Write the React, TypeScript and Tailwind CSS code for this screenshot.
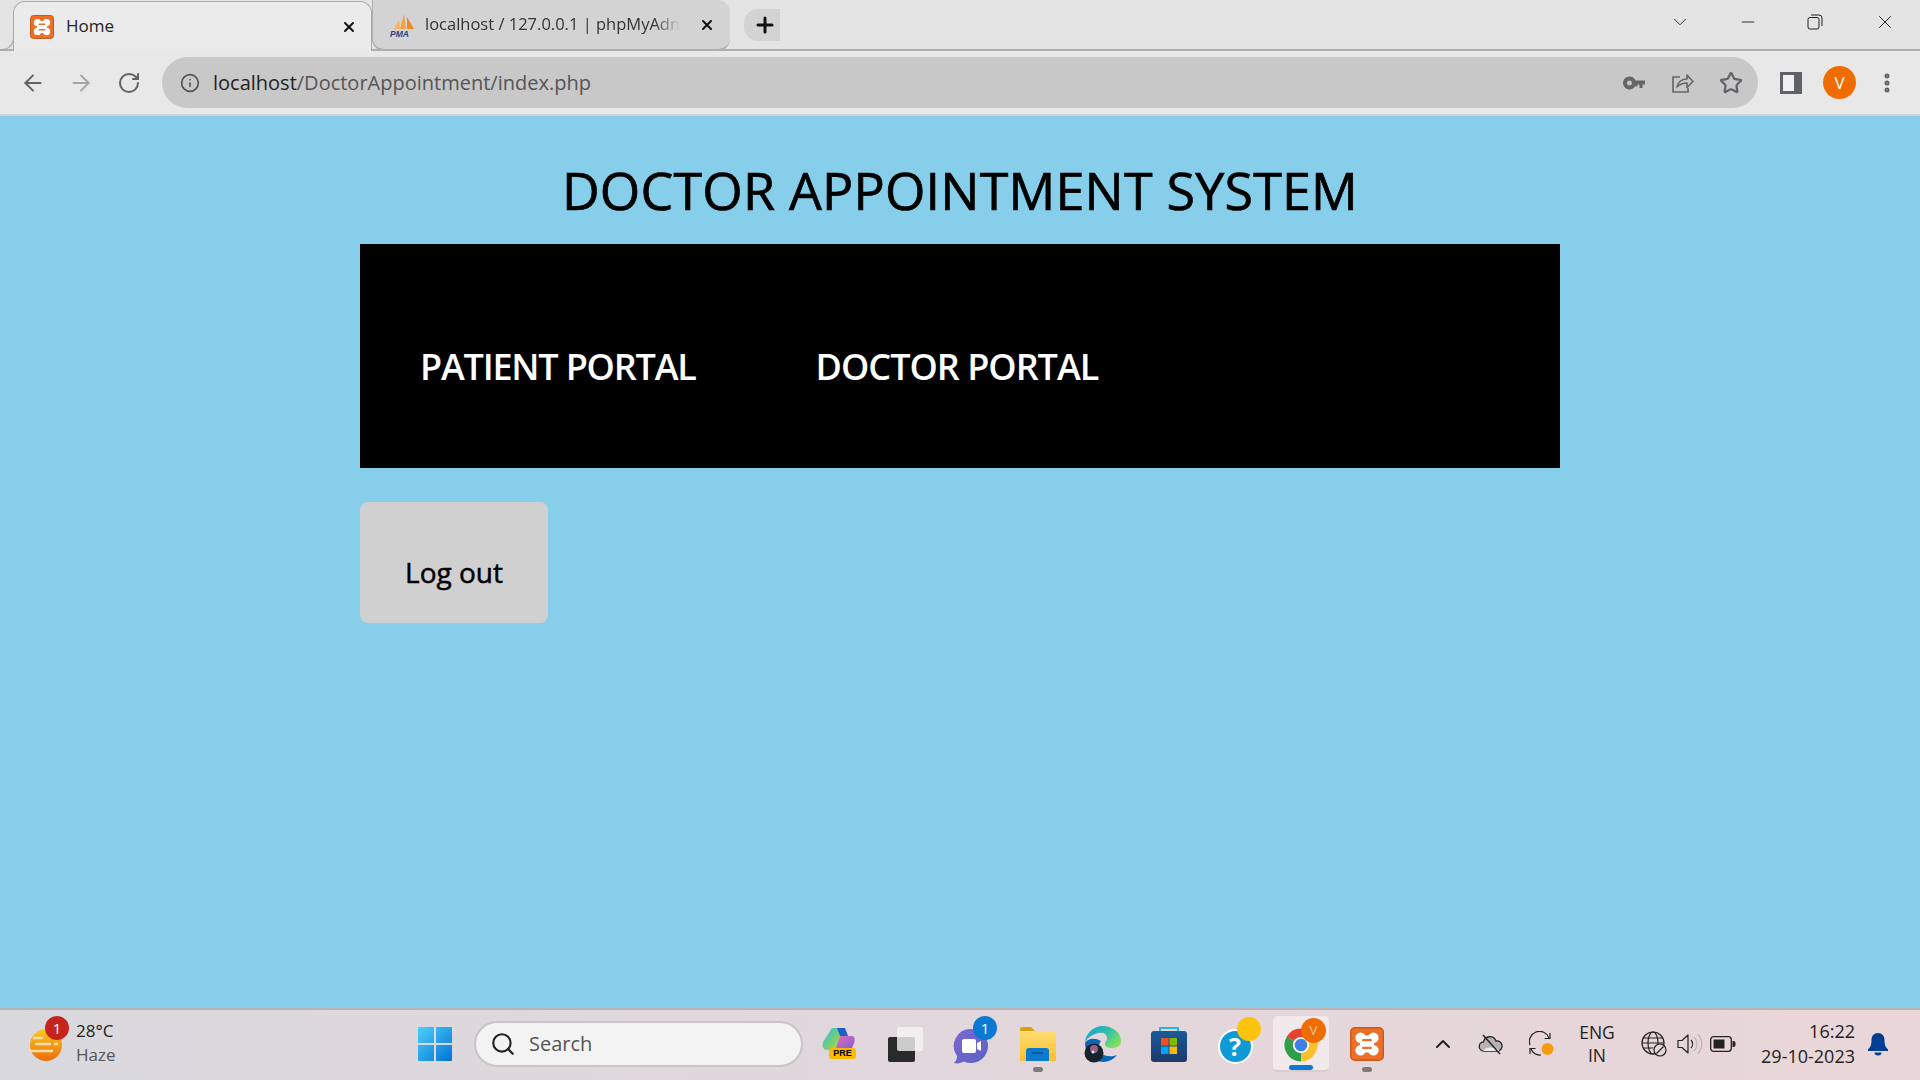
import { ArrowLeft, ArrowRight, RotateCw, Info, Star, X, Plus, Minus, ChevronDown, ChevronUp, Search, EllipsisVertical } from "lucide-react";

const uiFont = "font-['Open_Sans','Noto_Sans',sans-serif]";

function XamppIcon({ size }: { size: number }) {
  return (
    <svg width={size} height={size} viewBox="0 0 24 24">
      <rect x="0.5" y="0.5" width="23" height="23" rx="3" fill="#ec6f27" stroke="#c9591b" />
      <g fill="#fff">
        <circle cx="7.5" cy="7.6" r="3.7" />
        <circle cx="16.5" cy="7.6" r="3.7" />
        <circle cx="7.5" cy="16.4" r="3.7" />
        <circle cx="16.5" cy="16.4" r="3.7" />
        <rect x="7" y="6" width="10" height="12" />
      </g>
      <g fill="#ec6f27">
        <circle cx="12" cy="3.9" r="1.9" />
        <circle cx="12" cy="20.1" r="1.9" />
        <circle cx="3" cy="12" r="1.8" />
        <circle cx="21" cy="12" r="1.8" />
        <rect x="8.5" y="8.5" width="7" height="1.5" rx="0.7" />
        <rect x="8.5" y="14" width="7" height="1.5" rx="0.7" />
      </g>
    </svg>
  );
}

function PmaIcon() {
  return (
    <svg width="26" height="26" viewBox="0 0 26 26">
      <path d="M4 17 9 8l1 9z" fill="#f6b26b" />
      <path d="M10 17 14 2l2 15z" fill="#f7a13c" />
      <path d="M17 17V5l7 12z" fill="#f08a1d" />
      <text x="0" y="25" fontSize="8.5" fontWeight="800" fontStyle="italic" fill="#2e3f83" fontFamily="Liberation Sans, sans-serif">PMA</text>
    </svg>
  );
}

function KeyIcon() {
  return (
    <svg width="22" height="14" viewBox="0 0 22 14">
      <path d="M6.5 0.5a6.5 6.5 0 0 1 6 4H22v4h-2.5v3.5h-3V8.5h-2V10.5h-2V9.5a6.500 6.500 0 1 1-6-9zm0 4a2.500 2.500 0 1 0 0 5 2.500 2.500 0 0 0 0-5z" fill="#666" fillRule="evenodd" />
    </svg>
  );
}

function ShareIcon() {
  return (
    <svg width="24" height="24" viewBox="0 0 24 24" fill="none" stroke="#666" strokeWidth="1.6">
      <path d="M10 6H3v15h15v-4" />
      <path d="M7 16c1-5 5-8 10-8V4l6 6.5-6 6V12c-4 0-7 1-10 4z" strokeLinejoin="round" />
    </svg>
  );
}

function SidePanelIcon() {
  return (
    <svg width="22" height="22" viewBox="0 0 22 22">
      <rect width="22" height="22" fill="#5f6368" />
      <rect x="3" y="3" width="11" height="16" fill="#f1f1f1" />
    </svg>
  );
}

function RestoreIcon() {
  return (
    <svg width="16" height="16" viewBox="0 0 16 16" fill="none" stroke="#222" strokeWidth="1">
      <rect x="1" y="3.5" width="11" height="11.5" rx="2" />
      <path d="M4 1h8a3 3 0 0 1 3 3v8" />
    </svg>
  );
}

function WeatherIcon() {
  return (
    <div className="relative w-[40px] h-[40px]">
      <svg width="36" height="36" viewBox="0 0 36 36" className="absolute left-0 top-[3px]">
        <defs>
          <linearGradient id="sun" x1="0" y1="0" x2="0" y2="1">
            <stop offset="0" stopColor="#fdc921" />
            <stop offset="1" stopColor="#ea6d0c" />
          </linearGradient>
        </defs>
        <circle cx="18" cy="18" r="16" fill="url(#sun)" />
        <g stroke="#f3dda9" strokeWidth="2.4" strokeLinecap="round">
          <path d="M6 11h8M8 17h14M2 24h22M27 17h2" />
        </g>
      </svg>
      <span className="absolute left-[17px] top-[-8px] w-[24px] h-[24px] rounded-full bg-[#c4261d] text-white text-[15px] flex items-center justify-center">1</span>
    </div>
  );
}

function WindowsIcon() {
  return (
    <svg width="36" height="36" viewBox="0 0 36 36">
      <defs>
        <linearGradient id="win" x1="0" y1="0" x2="1" y2="1">
          <stop offset="0" stopColor="#4fd0fb" />
          <stop offset="1" stopColor="#0073d4" />
        </linearGradient>
      </defs>
      <path d="M1 2a1 1 0 0 1 1-1h15v16H1zM19 1h15a1 1 0 0 1 1 1v15H19zM1 19h16v16H2a1 1 0 0 1-1-1zM19 19h16v15a1 1 0 0 1-1 1H19z" fill="url(#win)" />
    </svg>
  );
}

function CopilotIcon() {
  return (
    <div className="relative w-[36px] h-[36px]">
      <svg width="34" height="30" viewBox="0 0 34 30" className="absolute left-0 top-0">
        <defs>
          <linearGradient id="cop1" x1="0" y1="0" x2="1" y2="1">
            <stop offset="0" stopColor="#2cb7f0" />
            <stop offset="0.6" stopColor="#7fd06a" />
            <stop offset="1" stopColor="#d9d64d" />
          </linearGradient>
          <linearGradient id="cop2" x1="0" y1="0" x2="1" y2="1">
            <stop offset="0" stopColor="#e26fb0" />
            <stop offset="1" stopColor="#7c5ae0" />
          </linearGradient>
        </defs>
        <path d="M10 2h10l-6 22H5C1 24 0 20 1 16z" fill="url(#cop1)" />
        <path d="M15 2h8l3 8h-8z" fill="#1b5fc9" />
        <path d="M18 10h12c3 0 3 4 2 7l-2 5c-1 2-3 3-5 3h-12z" fill="url(#cop2)" />
      </svg>
      <span className="absolute left-[7px] top-[22px] w-[27px] h-[11px] rounded-[3px] bg-[#fdb900] text-[9px] font-bold leading-[11px] text-center text-black font-['Liberation_Sans',sans-serif]">PRE</span>
    </div>
  );
}

function TaskViewIcon() {
  return (
    <svg width="36" height="36" viewBox="0 0 36 36">
      <rect x="1" y="11" width="27" height="25" rx="2" fill="#2a2a2a" />
      <rect x="10" y="1" width="26" height="24" rx="2" fill="#f4f4f4" fillOpacity="0.8" />
    </svg>
  );
}

function TeamsIcon() {
  return (
    <div className="relative w-[38px] h-[38px]">
      <svg width="36" height="36" viewBox="0 0 36 36" className="absolute left-0 top-[3px]">
        <defs>
          <linearGradient id="teams" x1="0" y1="0" x2="1" y2="1">
            <stop offset="0" stopColor="#7c68d4" />
            <stop offset="1" stopColor="#5a62c2" />
          </linearGradient>
        </defs>
        <path d="M18 1a17 17 0 1 1-7 32.5C8 35 4 36 1 35c2-2 3-4 3-7A17 17 0 0 1 18 1z" fill="url(#teams)" />
        <rect x="9" y="11" width="14" height="14" rx="2" fill="#fff" />
        <path d="M24 15l4-2v10l-4-2z" fill="#fff" />
      </svg>
      <span className="absolute left-[20px] top-[-9px] w-[24px] h-[24px] rounded-full bg-[#0b78d4] text-white text-[15px] flex items-center justify-center">1</span>
    </div>
  );
}

function ExplorerIcon() {
  return (
    <svg width="36" height="34" viewBox="0 0 36 34">
      <defs>
        <linearGradient id="folder" x1="0" y1="0" x2="0" y2="1">
          <stop offset="0" stopColor="#fedc6e" />
          <stop offset="1" stopColor="#fbc02d" />
        </linearGradient>
      </defs>
      <path d="M0 2a2 2 0 0 1 2-2h9l4 4h-15z" fill="#dc9f0c" />
      <path d="M0 5h36v29H0z" fill="url(#folder)" />
      <path d="M6 34V24a3 3 0 0 1 3-3h17a3 3 0 0 1 3 3v10z" fill="#0c7bcf" />
      <path d="M12 26h11" stroke="#0a4d8a" strokeWidth="1.5" />
    </svg>
  );
}

function EdgeIcon() {
  return (
    <svg width="38" height="38" viewBox="0 0 38 38">
      <defs>
        <linearGradient id="edgeOuter" x1="0" y1="0" x2="1" y2="0.6">
          <stop offset="0" stopColor="#0f9fd8" />
          <stop offset="0.6" stopColor="#35c1a5" />
          <stop offset="1" stopColor="#7ee05c" />
        </linearGradient>
      </defs>
      <path d="M19 1c10 0 18 7 18 15 0 5-4 7-9 7-4 0-7-1-7-4 0-3 2-3 2-6 0-4-4-6-8-5C8 9 2 14 1 18 1 9 9 1 19 1z" fill="url(#edgeOuter)" />
      <path d="M1 18c0 10 8 19 18 19 6 0 11-3 14-7-5 2-12 2-16-2-3-3-3-8 0-12C10 12 3 14 1 18z" fill="#0b66b8" />
      <circle cx="10" cy="28" r="9.5" fill="#16242e" />
      <circle cx="10" cy="24" r="4" fill="#9a5f86" />
      <circle cx="9" cy="27" r="1.5" fill="#e9e3e8" />
    </svg>
  );
}

function StoreIcon() {
  return (
    <svg width="36" height="36" viewBox="0 0 36 36">
      <defs>
        <linearGradient id="bag" x1="0" y1="0" x2="0" y2="1">
          <stop offset="0" stopColor="#1a5a9a" />
          <stop offset="1" stopColor="#1c3a6b" />
        </linearGradient>
      </defs>
      <path d="M9 8V2h18v6" fill="none" stroke="#29b3e8" strokeWidth="2" />
      <rect y="5" width="36" height="31" rx="3" fill="url(#bag)" />
      <rect x="10" y="12" width="7.5" height="7.5" fill="#f25022" />
      <rect x="18.5" y="12" width="7.5" height="7.5" fill="#7fba00" />
      <rect x="10" y="20.5" width="7.5" height="7.5" fill="#00a4ef" />
      <rect x="18.5" y="20.5" width="7.5" height="7.5" fill="#ffb900" />
    </svg>
  );
}

function HelpIcon() {
  return (
    <div className="relative w-[36px] h-[36px]">
      <div className="absolute left-0 top-[3px] w-[35px] h-[35px] rounded-full bg-[#0f9ad6] border-2 border-white flex items-center justify-center text-white text-[25px] font-bold font-['Open_Sans',sans-serif]">?</div>
      <div className="absolute left-[19px] top-[-9px] w-[24px] h-[24px] rounded-full bg-[#fdc30e]" />
    </div>
  );
}

function ChromeIcon() {
  return (
    <div className="relative w-[36px] h-[36px]">
      <svg width="36" height="36" viewBox="0 0 24 24" className="absolute left-0 top-[2px]">
        <path d="M12 12 2.47 6.5A11 11 0 0 1 21.53 6.5Z" fill="#e5432f" />
        <path d="M12 12 21.53 6.5A11 11 0 0 1 12 23Z" fill="#fbc02d" />
        <path d="M12 12 12 23A11 11 0 0 1 2.47 6.5Z" fill="#2f9e48" />
        <circle cx="12" cy="12" r="5.4" fill="#fff" />
        <circle cx="12" cy="12" r="4.2" fill="#3f7fe8" />
      </svg>
      <span className="absolute left-[18px] top-[-7px] w-[25px] h-[25px] rounded-full bg-[#ee6c00] text-[#f4c9a0] text-[13px] flex items-center justify-center">V</span>
    </div>
  );
}

function CloudOffIcon() {
  return (
    <svg width="26" height="22" viewBox="0 0 26 22" fill="none">
      <path d="M6 18a4.5 4.5 0 0 1-.5-9 6.5 6.5 0 0 1 12.5-1 5 5 0 0 1 2 10z" fill="#b9b3b5" stroke="#222" strokeWidth="1.3" />
      <path d="M5 18c2-4 10-5 16-1v1z" fill="#f0ecec" />
      <path d="M5 2l17 19" stroke="#222" strokeWidth="1.4" />
    </svg>
  );
}

function SyncIcon() {
  return (
    <svg width="26" height="26" viewBox="0 0 26 26" fill="none" stroke="#222" strokeWidth="1.2">
      <path d="M1 14A10 10 0 0 1 20 7" />
      <path d="M21 2v5.5h-5.5M1 23v-5.5h5.5" />
      <path d="M2 18a10 10 0 0 0 10 6" />
      <circle cx="18.5" cy="18" r="6" fill="#f59b11" stroke="none" />
    </svg>
  );
}

function GlobeBlockedIcon() {
  return (
    <svg width="26" height="26" viewBox="0 0 26 26" fill="none" stroke="#222" strokeWidth="1.2">
      <circle cx="12" cy="12" r="11" />
      <ellipse cx="12" cy="12" rx="5" ry="11" />
      <path d="M1 12h22M2.5 7h19M2.5 17h10" />
      <circle cx="19" cy="19" r="6" fill="#e8d6d8" />
      <path d="M15.5 22.5l7-7" />
    </svg>
  );
}

function VolumeIcon() {
  return (
    <svg width="26" height="24" viewBox="0 0 26 24" fill="none" stroke="#222" strokeWidth="1.2">
      <path d="M1 8.5h4L11 3v18l-6-5.5H1z" strokeLinejoin="round" />
      <path d="M14 8a6 6 0 0 1 0 8" />
      <path d="M17 5a10 10 0 0 1 0 14M21 2.5a14 14 0 0 1 0 19" stroke="#bdb2b4" />
    </svg>
  );
}

function BatteryIcon() {
  return (
    <svg width="26" height="18" viewBox="0 0 26 18">
      <rect x="0.7" y="1.7" width="20.6" height="14.6" rx="3" fill="none" stroke="#222" strokeWidth="1.3" />
      <rect x="3.5" y="4.5" width="11" height="9" fill="#222" />
      <path d="M22.5 6h1a2 2 0 0 1 2 2v2a2 2 0 0 1-2 2h-1z" fill="#222" />
    </svg>
  );
}

function BellIcon() {
  return (
    <svg width="22" height="24" viewBox="0 0 22 24">
      <path d="M11 1c4 0 6.5 3 6.5 7 0 5 1 7 3.5 9.5V19H1v-1.5C3.5 15 4.5 13 4.5 8 4.5 4 7 1 11 1z" fill="#003e92" />
      <path d="M7.5 20.5h7a3.5 3 0 0 1-7 0z" fill="#003e92" />
    </svg>
  );
}

function TaskbarSlot({ width, dot, children }: { width: number; dot?: boolean; children: React.ReactNode }) {
  return (
    <div className="relative h-full flex items-center justify-center" style={{ width }}>
      {children}
      {dot && <span className="absolute bottom-[6px] w-[10px] h-[5px] rounded-full bg-[#7d7a7c]" />}
    </div>
  );
}

function App() {
  return (
    <div className={`w-[1920px] h-[1080px] flex flex-col overflow-hidden bg-[#87ceeb] ${uiFont}`}>
      {/* tab strip */}
      <div className="relative h-[51px] flex items-end bg-[#e4e4e4] border-b-2 border-[#aeaeae] shrink-0">
        <div className="relative ml-[13px] w-[359px] h-[50px] mb-[-2px] flex items-center pl-[16px] pr-[14px] bg-[#ebebeb] border border-b-0 border-[#a9a9a9] rounded-t-[12px] z-10">
          <span className="absolute left-[-14px] bottom-[1px] w-[14px] h-[14px] border-r border-b border-[#a9a9a9] rounded-br-[12px]" />
          <XamppIcon size={24} />
          <span className="ml-[12px] mt-[-2px] text-[17px] text-[#222] flex-1">Home</span>
          <X size={16} strokeWidth={3} className="text-[#111]" />
        </div>
        <div className="w-[358px] h-[51px] mb-[-2px] flex items-center pl-[17px] pr-[15px] bg-[#d3d3d3] border-l border-b-2 border-[#aeaeae] rounded-bl-[12px] rounded-r-[12px]">
          <PmaIcon />
          <span className="ml-[9px] w-[255px] text-[16.5px] text-[#333] whitespace-nowrap overflow-hidden mask-r-from-90%">localhost / 127.0.0.1 | phpMyAdmin</span>
          <X size={16} strokeWidth={3} className="text-[#111] ml-auto" />
        </div>
        <div className="ml-[14px] mb-[8px] w-[36px] h-[32px] flex items-center justify-center bg-[#d3d3d3] rounded-l-[14px]">
          <Plus size={24} strokeWidth={3} className="text-[#111] ml-[6px]" />
        </div>
        <div className="ml-auto h-full flex items-center pb-[6px]">
          <ChevronDown size={22} strokeWidth={1} className="text-[#222] mr-[47px]" />
          <Minus size={20} strokeWidth={1} className="text-[#111] mr-[49px]" />
          <RestoreIcon />
          <X size={22} strokeWidth={1} className="text-[#111] ml-[51px] mr-[24px]" />
        </div>
      </div>

      {/* toolbar */}
      <div className="h-[65px] flex items-center bg-[#e8e8e8] border-b-2 border-[#d2d2d2] shrink-0">
        <div className="w-[162px] flex items-center pl-[20px]">
          <ArrowLeft size={26} strokeWidth={1.8} className="text-[#5f6368]" />
          <ArrowRight size={26} strokeWidth={1.8} className="text-[#a4a4a4] ml-[22px]" />
          <RotateCw size={24} strokeWidth={2} className="text-[#5f6368] ml-[23px]" />
        </div>
        <div className="w-[1596px] h-[51px] flex items-center pl-[18px] pr-[15px] rounded-full bg-[#c8c8c8]">
          <Info size={20} strokeWidth={2} className="text-[#555]" />
          <span className="ml-[13px] text-[20px] text-[#222]">
            localhost<span className="text-[#555]">/DoctorAppointment/index.php</span>
          </span>
          <div className="ml-auto flex items-center gap-[25px]">
            <KeyIcon />
            <ShareIcon />
            <Star size={24} strokeWidth={2.2} className="text-[#5f6368]" />
          </div>
        </div>
        <div className="ml-[22px]"><SidePanelIcon /></div>
        <div className="ml-[21px] w-[33px] h-[33px] rounded-full bg-[#f06c00] text-white text-[17px] flex items-center justify-center">V</div>
        <EllipsisVertical size={24} strokeWidth={3} className="ml-[19px] text-[#5f6368]" />
      </div>

      {/* page */}
      <main className="flex-1 flex flex-col items-center">
        <h1 className="h-[128px] flex items-center text-[52px] font-normal text-black tracking-[0.2px] [-webkit-text-stroke:0.7px_#000] pt-[19px]">DOCTOR APPOINTMENT SYSTEM</h1>
        <nav className="w-[1200px] h-[224px] bg-black flex items-center gap-[120px] pl-[60px] pt-[22px]">
          <a className="text-[36px] font-semibold text-white tracking-[-1.2px]">PATIENT PORTAL</a>
          <a className="text-[36px] font-semibold text-white tracking-[-1px]">DOCTOR PORTAL</a>
        </nav>
        <div className="w-[1200px] mt-[34px]">
          <button className="w-[188px] h-[121px] rounded-[8px] bg-[#d0d0d0] text-[28px] font-normal text-black [-webkit-text-stroke:0.5px_#000] pt-[18px]">Log out</button>
        </div>
      </main>

      {/* taskbar */}
      <div className="h-[72px] flex items-center pb-[2px] bg-linear-to-r from-[#d9d9dd] via-[#e2d7dc] to-[#e9d6d8] border-t-2 border-[#b8b2b3] shrink-0">
        <div className="w-[417px] flex items-center pl-[28px]">
          <WeatherIcon />
          <div className="ml-[8px] flex flex-col leading-[24px] mt-[-2px]">
            <span className="text-[17px] text-[#222]">28°C</span>
            <span className="text-[17px] text-[#555]">Haze</span>
          </div>
        </div>
        <WindowsIcon />
        <div className="ml-[21px] w-[329px] h-[46px] flex items-center pl-[14px] rounded-full bg-[#f3f3f4] border-2 border-[#c8c4c6]">
          <Search size={26} strokeWidth={2} className="text-[#222]" />
          <span className="ml-[13px] text-[20px] text-[#555]">Search</span>
        </div>
        <div className="ml-[4px] h-full flex items-center">
          <TaskbarSlot width={66}><CopilotIcon /></TaskbarSlot>
          <TaskbarSlot width={64}><TaskViewIcon /></TaskbarSlot>
          <TaskbarSlot width={70}><TeamsIcon /></TaskbarSlot>
          <TaskbarSlot width={61} dot><ExplorerIcon /></TaskbarSlot>
          <TaskbarSlot width={70}><EdgeIcon /></TaskbarSlot>
          <TaskbarSlot width={61}><StoreIcon /></TaskbarSlot>
          <TaskbarSlot width={73}><HelpIcon /></TaskbarSlot>
          <div className="relative ml-[1px] w-[56px] h-[56px] flex items-center justify-center rounded-[5px] bg-[#f1e9eb] border-b-2 border-[#d9cdd0]">
            <ChromeIcon />
            <span className="absolute bottom-[0px] w-[24px] h-[5px] rounded-full bg-[#0b78d4]" />
          </div>
          <TaskbarSlot width={76} dot><XamppIcon size={34} /></TaskbarSlot>
        </div>
        <div className="flex-1 h-full flex items-center pl-[26px]">
          <ChevronUp size={24} strokeWidth={2} className="text-[#222]" />
          <div className="ml-[23px]"><CloudOffIcon /></div>
          <div className="ml-[25px]"><SyncIcon /></div>
          <div className="ml-[23px] w-[38px] flex flex-col items-center text-[17.5px] leading-[23px] text-[#222]">
            <span>ENG</span>
            <span>IN</span>
          </div>
          <div className="ml-[25px]"><GlobeBlockedIcon /></div>
          <div className="ml-[10px]"><VolumeIcon /></div>
          <div className="ml-[7px]"><BatteryIcon /></div>
          <div className="ml-auto flex flex-col items-end text-[18px] leading-[25px] text-[#222]">
            <span>16:22</span>
            <span>29-10-2023</span>
          </div>
          <div className="ml-[12px] mr-[31px]"><BellIcon /></div>
        </div>
      </div>
    </div>
  );
}

export default App;
